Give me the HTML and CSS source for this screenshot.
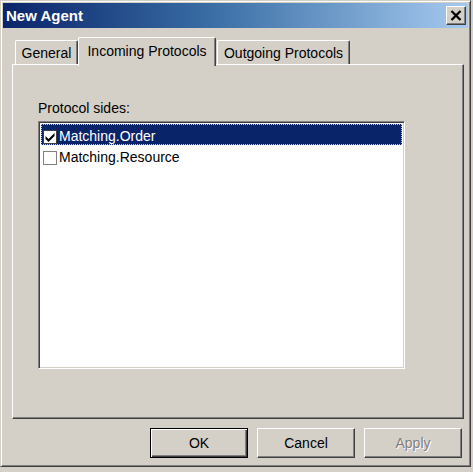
FILE: index.html
```html
<!DOCTYPE html>
<html>
<head>
<meta charset="utf-8">
<title>New Agent</title>
<link rel="stylesheet" href="styles.css">
</head>
<body>
<div class="window">
  <div class="titlebar">
    <span class="title">New Agent</span>
    <span class="close">
      <svg width="12" height="11" viewBox="0 0 12 11"><path d="M1.5 1 L10.5 10 M10.5 1 L1.5 10" stroke="#000" stroke-width="2.4" fill="none"/></svg>
    </span>
  </div>
  <div class="tabs">
    <div class="tab tab-general">General</div>
    <div class="tab tab-active">Incoming Protocols</div>
    <div class="tab tab-outgoing">Outgoing Protocols</div>
  </div>
  <div class="panel">
    <div class="label">Protocol sides:</div>
    <div class="listbox">
      <div class="row selected">
        <span class="check checked">
          <svg width="12" height="12" viewBox="0 0 12 12"><path d="M1.5 5 L4.5 8 L10.5 2 L10.5 5 L4.5 11 L1.5 8 Z" fill="#000"/></svg>
        </span>
        <span class="rowtext">Matching.Order</span>
      </div>
      <div class="row">
        <span class="check"></span>
        <span class="rowtext">Matching.Resource</span>
      </div>
    </div>
  </div>
  <div class="buttons">
    <div class="btn btn-default"><span>OK</span></div>
    <div class="btn"><span>Cancel</span></div>
    <div class="btn btn-disabled"><span>Apply</span></div>
  </div>
</div>
</body>
</html>
```
FILE: styles.css
```css
html, body {
  margin: 0;
  padding: 0;
  background: #d4d0c8;
}
body {
  font-family: "Liberation Sans", Arial, sans-serif;
  font-size: 14px;
  color: #000;
}
.window {
  box-sizing: border-box;
  width: 471px;
  height: 467px;
  border-top: 1px solid #d4d0c8;
  border-left: 1px solid #d4d0c8;
  border-right: 1px solid #404040;
  border-bottom: 1px solid #404040;
  box-shadow: inset 1px 1px 0 #fff, inset -1px -1px 0 #808080;
  padding: 2px;
  background: #d4d0c8;
  display: flex;
  flex-direction: column;
}
.titlebar {
  height: 25px;
  background: linear-gradient(to right, #0a246a 0%, #3a6ea5 45%, #a6caf0 100%);
  display: flex;
  align-items: center;
  justify-content: space-between;
  padding: 0 2px 0 3px;
}
.title {
  color: #fff;
  font-weight: bold;
  font-size: 15px;
}
.close {
  box-sizing: border-box;
  width: 20px;
  height: 19px;
  background: #d4d0c8;
  border-top: 1px solid #fff;
  border-left: 1px solid #fff;
  border-right: 1px solid #404040;
  border-bottom: 1px solid #404040;
  box-shadow: inset -1px -1px 0 #808080;
  display: flex;
  align-items: center;
  justify-content: center;
}
.close svg { display: block; margin-right: 1px; }
.tabs {
  display: flex;
  align-items: flex-end;
  height: 27px;
  margin-top: 9px;
  padding-left: 12px;
  position: relative;
  z-index: 1;
}
.tab {
  box-sizing: border-box;
  height: 24px;
  border-top: 1px solid #fff;
  border-left: 1px solid #fff;
  border-right: 1px solid #404040;
  box-shadow: inset -1px 0 0 #808080;
  border-radius: 2px 2px 0 0;
  display: flex;
  align-items: center;
  justify-content: center;
  padding-top: 1px;
  background: #d4d0c8;
}
.tab-general { width: 63px; }
.tab-active {
  width: 138px;
  height: 29px;
  margin-bottom: -2px;
  padding-bottom: 3px;
}
.tab-outgoing { width: 133px; margin-left: 1px; }
.panel {
  box-sizing: border-box;
  width: 452px;
  height: 355px;
  margin-left: 9px;
  border-top: 1px solid #fff;
  border-left: 1px solid #fff;
  border-right: 1px solid #404040;
  border-bottom: 1px solid #404040;
  box-shadow: inset -1px -1px 0 #808080;
  padding: 35px 0 0 25px;
}
.label {
  height: 16px;
  line-height: 16px;
  margin-bottom: 5px;
}
.listbox {
  box-sizing: border-box;
  width: 367px;
  height: 248px;
  background: #fff;
  border-top: 1px solid #808080;
  border-left: 1px solid #808080;
  border-right: 1px solid #fff;
  border-bottom: 1px solid #fff;
  box-shadow: inset 1px 1px 0 #404040, inset -1px -1px 0 #d4d0c8;
  padding: 2px;
}
.row {
  height: 21px;
  display: flex;
  align-items: flex-end;
  padding-left: 2px;
  padding-bottom: 1px;
  box-sizing: border-box;
}
.row.selected {
  background: #0a246a;
  color: #fff;
  outline: 1px dotted #c8c8c8;
  outline-offset: -1px;
}
.check {
  box-sizing: border-box;
  width: 14px;
  height: 14px;
  background: #fff;
  border: 1px solid #808080;
  display: flex;
  align-items: center;
  justify-content: center;
  margin-right: 2px;
}
.check.checked {
  border-color: #404040;
}
.check svg { display: block; }
.rowtext {
  line-height: 16px;
}
.buttons {
  display: flex;
  justify-content: flex-end;
  gap: 9px;
  margin-top: 9px;
  padding-right: 6px;
}
.btn {
  box-sizing: border-box;
  width: 98px;
  height: 30px;
  border-top: 1px solid #fff;
  border-left: 1px solid #fff;
  border-right: 1px solid #404040;
  border-bottom: 1px solid #404040;
  box-shadow: inset -1px -1px 0 #808080;
  display: flex;
  align-items: center;
  justify-content: center;
  background: #d4d0c8;
}
.btn-default {
  border: 1px solid #000;
  box-shadow: inset 1px 1px 0 #fff, inset -1px -1px 0 #404040, inset -2px -2px 0 #808080;
}
.btn-disabled span {
  color: #808080;
  text-shadow: 1px 1px 0 #fff;
}
```
